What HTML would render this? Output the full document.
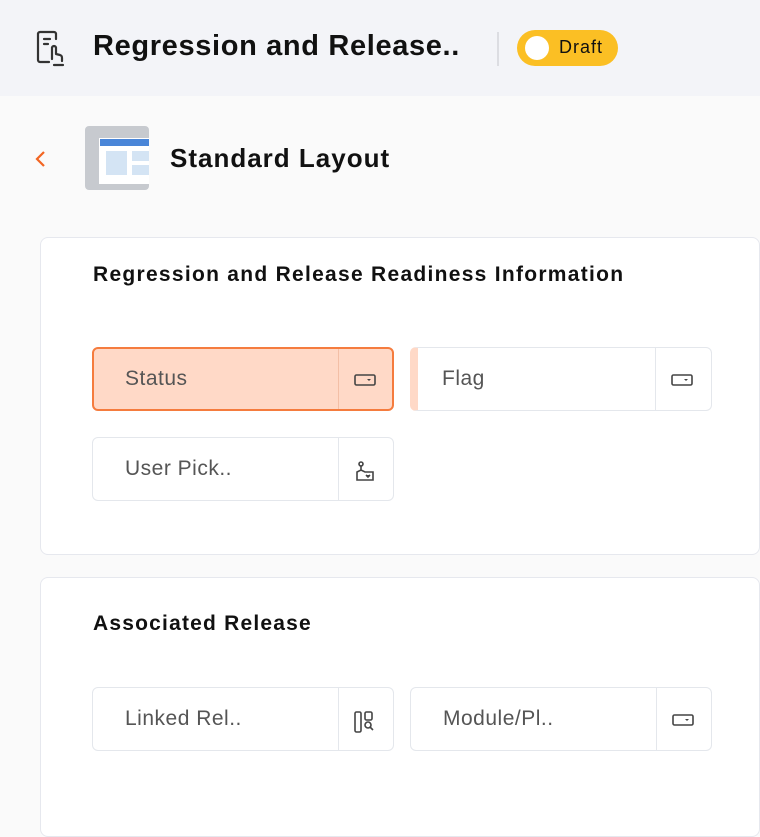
<!DOCTYPE html><html><head><style>
*{box-sizing:border-box;margin:0;padding:0}
body{width:760px;height:788px;overflow:hidden;background:#fafafa;font-family:"Liberation Sans",sans-serif;position:relative;color:#111}
.hdr{position:absolute;left:0;top:0;width:760px;height:96px;background:#f3f4f8}
.abs{position:absolute;white-space:nowrap}
.card{position:absolute;left:40px;width:720px;background:#fff;border:1px solid #e6e8ee;border-radius:8px}
.f{position:absolute;width:302px;height:64px;background:#fff;border:1px solid #e4e7ec;border-radius:6px}
.f .t{position:absolute;left:32px;top:19px;font-size:21px;color:#555;letter-spacing:0.5px;white-space:nowrap}
.f .d{position:absolute;left:245px;top:0;bottom:0;border-left:1px solid #e4e7ec}
.f svg{position:absolute;left:260px;top:22px}
</style></head><body>
<div class="hdr"></div>
<svg class="abs" style="left:35px;top:29px" width="40" height="40" viewBox="0 0 40 40" fill="none" stroke="#333" stroke-width="2.2" stroke-linecap="round" stroke-linejoin="round"><path d="M14 33H5a2 2 0 0 1-2-2V5a2 2 0 0 1 2-2h14a2 2 0 0 1 2 2v5"/><path d="M9 10h6M9 15h4"/><path d="M17 30V19a2 2 0 0 1 4 0v6l4 1a3 3 0 0 1 2 3v3M19 36h9"/></svg>
<div class="abs" style="left:93px;top:30px;font-size:29px;font-weight:bold;letter-spacing:0.65px">Regression and Release..</div>
<div class="abs" style="left:497px;top:32px;width:2px;height:34px;background:#dcdde2"></div>
<div class="abs" style="left:517px;top:30px;width:101px;height:36px;border-radius:18px;background:#fbbf24"></div>
<div class="abs" style="left:525px;top:36px;width:24px;height:24px;border-radius:50%;background:#fff"></div>
<div class="abs" style="left:559px;top:37px;font-size:18px;color:#111;letter-spacing:1px">Draft</div>
<svg class="abs" style="left:34px;top:149px" width="14" height="20" viewBox="0 0 14 20"><path d="M10 3L3 10l7 7" stroke="#f26522" stroke-width="2.2" fill="none"/></svg>
<div class="abs" style="left:85px;top:126px;width:64px;height:64px;border-radius:4px;background:#c7cacf"></div>
<div class="abs" style="left:99px;top:138px;width:50px;height:46px;background:#fff"></div>
<div class="abs" style="left:100px;top:139px;width:49px;height:7px;background:#4a86d8"></div>
<div class="abs" style="left:106px;top:151px;width:21px;height:24px;background:#d4e4f4"></div>
<div class="abs" style="left:132px;top:151px;width:17px;height:10px;background:#d4e4f4"></div>
<div class="abs" style="left:132px;top:165px;width:17px;height:10px;background:#d4e4f4"></div>
<div class="abs" style="left:170px;top:143px;font-size:26px;font-weight:bold;letter-spacing:1px">Standard Layout</div>
<div class="card" style="top:237px;height:318px"></div>
<div class="abs" style="left:93px;top:263px;font-size:21px;font-weight:bold;letter-spacing:1.28px">Regression and Release Readiness Information</div>
<div class="f" style="left:92px;top:347px;background:#ffd9c7;border:2px solid #f57c3e"><div class="t" style="top:18px;left:31px">Status</div><div class="d" style="left:244px;border-color:#f3bfa6"></div><svg style="left:259px;top:21px" width="24" height="20" viewBox="0 0 24 20"><rect x="2" y="5" width="20" height="10" rx="1.5" fill="none" stroke="#444" stroke-width="1.6"/><path d="M14 9l2 2 2-2" fill="#444"/></svg></div>
<div class="f" style="left:410px;top:347px;border-left:8px solid #ffd9c7"><div class="t" style="left:24px">Flag</div><div class="d" style="left:237px"></div><svg style="left:252px" width="24" height="20" viewBox="0 0 24 20"><rect x="2" y="5" width="20" height="10" rx="1.5" fill="none" stroke="#444" stroke-width="1.6"/><path d="M14 9l2 2 2-2" fill="#444"/></svg></div>
<div class="f" style="left:92px;top:437px"><div class="t">User Pick..</div><div class="d"></div><svg width="24" height="24" viewBox="0 0 24 24" fill="none" stroke="#444" stroke-width="1.6"><circle cx="8" cy="4" r="2"/><path d="M8 6v4M4 20v-8l4-2 4 2h8v8z"/><path d="M13 15l2 2 2-2" fill="#444"/></svg></div>
<div class="card" style="top:577px;height:260px"></div>
<div class="abs" style="left:93px;top:612px;font-size:21px;font-weight:bold;letter-spacing:1.2px">Associated Release</div>
<div class="f" style="left:92px;top:687px"><div class="t">Linked Rel..</div><div class="d"></div><svg width="24" height="24" viewBox="0 0 24 24" fill="none" stroke="#444" stroke-width="1.6"><rect x="2" y="2" width="6" height="20" rx="1.5"/><rect x="12" y="2" width="7" height="8" rx="1.5"/><circle cx="15" cy="15" r="3"/><path d="M17 17l3 3"/></svg></div>
<div class="f" style="left:410px;top:687px"><div class="t">Module/Pl..</div><div class="d"></div><svg width="24" height="20" viewBox="0 0 24 20"><rect x="2" y="5" width="20" height="10" rx="1.5" fill="none" stroke="#444" stroke-width="1.6"/><path d="M14 9l2 2 2-2" fill="#444"/></svg></div>
</body></html>
